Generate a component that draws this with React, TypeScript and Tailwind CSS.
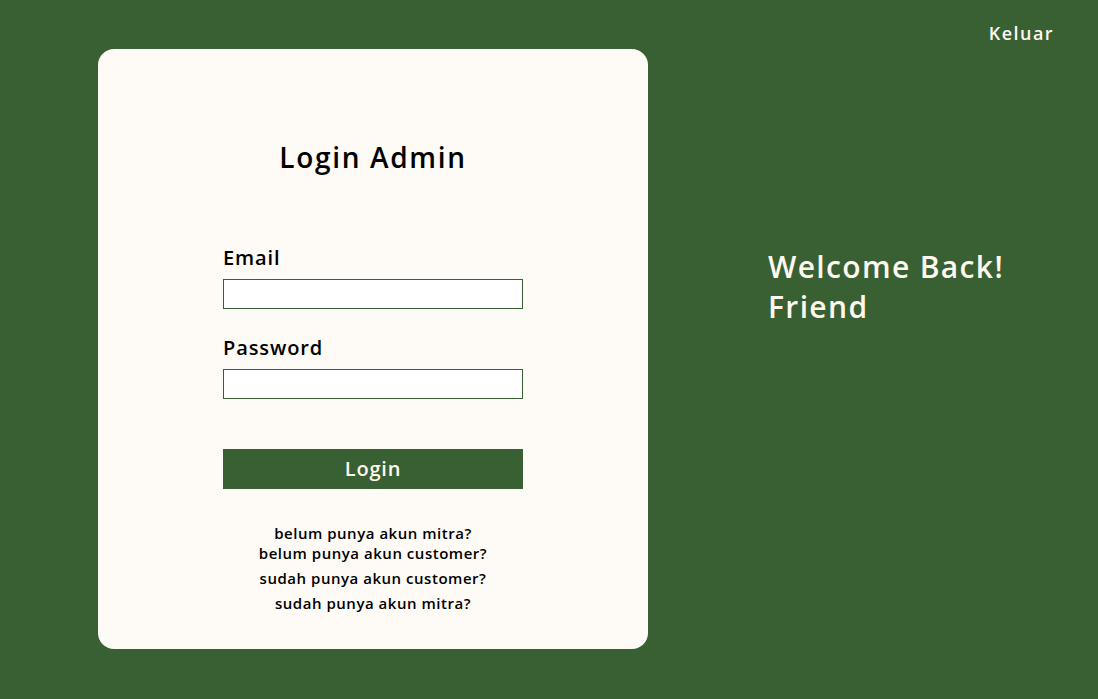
import React from "react";

const font = { fontFamily: '"Open Sans", "Noto Sans", sans-serif' };

export default function App() {
  const links = [
    "belum punya akun mitra?",
    "belum punya akun customer?",
  ];
  return (
    <div
      className="relative h-[699px] w-full bg-[#386033] flex items-start pt-[49px] pl-[98px]"
      style={font}
    >
      <a className="absolute right-[44px] top-[20px] text-[18px] tracking-[0.08em] font-semibold text-[#fff8f0] cursor-pointer">
        Keluar
      </a>

      <div className="w-[550px] h-[600px] bg-[#fefaf5] rounded-[16px] flex flex-col items-center pt-[87px]">
        <h1 className="text-[28px] leading-[42px] tracking-[0.06em] font-semibold text-black">Login Admin</h1>

        <form className="w-[300px] mt-[65px] flex flex-col">
          <label className="text-[20px] leading-[30px] tracking-[0.045em] font-semibold text-black">Email</label>
          <input type="email" className="mt-[6px] h-[30px] w-full bg-white border border-[#386033] outline-none px-2" />

          <label className="mt-[24px] text-[20px] leading-[30px] tracking-[0.045em] font-semibold text-black">Password</label>
          <input type="password" className="mt-[6px] h-[30px] w-full bg-white border border-[#386033] outline-none px-2" />

          <button type="button" className="mt-[50px] h-[40px] w-full bg-[#386033] text-[20px] tracking-[0.04em] font-semibold text-[#fff8f0]">
            Login
          </button>
        </form>

        <div className="mt-[34px] flex flex-col items-center text-[15px] leading-[20px] tracking-[0.035em] font-semibold text-black">
          {links.map((l) => (
            <a key={l} className="cursor-pointer">{l}</a>
          ))}
          <a className="mt-[5px] cursor-pointer">sudah punya akun customer?</a>
          <a className="mt-[5px] cursor-pointer">sudah punya akun mitra?</a>
        </div>
      </div>

      <div className="ml-[120px] mt-[198px] text-[30px] leading-[40px] tracking-[0.045em] font-semibold text-[#fff8f0]">
        <p>Welcome Back!</p>
        <p>Friend</p>
      </div>
    </div>
  );
}
